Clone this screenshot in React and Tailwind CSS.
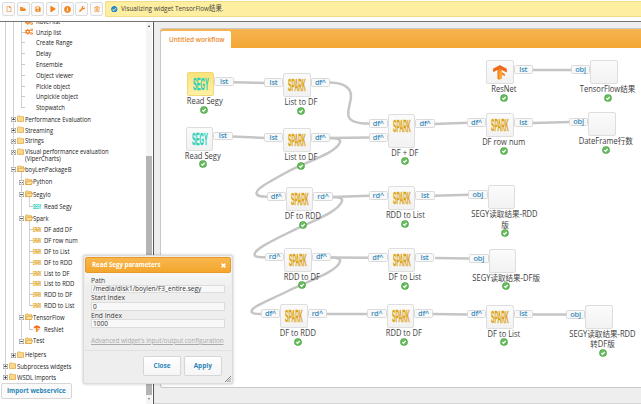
import React from "react";
import { FaFolderOpen, FaSave, FaPlay, FaInfoCircle, FaWrench, FaRegTrashAlt, FaRegFile, FaCheckCircle, FaCogs } from "react-icons/fa";

function BrandMark({ text, className }) {
  return (
    <svg viewBox="0 0 17 12" preserveAspectRatio="none" className={`overflow-visible ${className}`}>
      <g transform={text === "SPARK" ? "scale(0.325 1)" : "scale(0.4 1)"}>
        <text x="0" y="11.8" fontSize="16" fontWeight="700" fill="currentColor" stroke="currentColor" strokeWidth="0.3" fontFamily="Liberation Sans, sans-serif">
          {text}
        </text>
      </g>
    </svg>
  );
}

function TensorMark({ className }) {
  return (
    <svg viewBox="0 0 14 15" className={className}>
      <path d="M0.3 3.8 6.8 0.3 13.6 3.8V7.3L9 5V7.2L11.8 8.7V11.2L9 9.8V13.2L5.8 14.8 4.4 13.8V4.8L0.3 6.9Z" fill="#f58220" />
      <path d="M6.8 0.3 13.6 3.8V7.3L6.8 3.7 0.3 6.9V3.8Z" fill="#ee6a1f" />
      <path d="M7 5.2 9 4.5V13.2L6.2 14.8V5.4Z" fill="#f9a63a" />
    </svg>
  );
}

function Check() {
  return (
    <svg viewBox="0 0 16 16" className="-mt-[1px] h-[8px] w-[8px]">
      <circle cx="8" cy="8" r="7.6" fill="#4ba548" />
      <circle cx="8" cy="8" r="5.8" fill="#69bd5d" />
      <path d="M4.6 8.2 7 10.6 11.6 5.8" fill="none" stroke="#fff" strokeWidth="2.5" />
    </svg>
  );
}

function Folder({ open }) {
  return (
    <svg viewBox="0 0 16 14" className="h-[7px] w-[8px] shrink-0">
      <path d="M1 12.5V2.5L2.2 1.2H6L7.4 3H13V12.5Z" fill="#fbd98a" stroke="#d79a35" strokeWidth="1.3" />
      {open && <path d="M1 12.8 4 6H15.6L12.8 12.8Z" fill="#fde2a0" stroke="#d98f25" strokeWidth="1.3" />}
    </svg>
  );
}

function Expander({ open }) {
  return (
    <svg viewBox="0 0 9 9" className="h-[5px] w-[5px]">
      <rect x="0.5" y="0.5" width="8" height="8" fill="#fff" stroke="#8a8a8a" />
      <path d={open ? "M2 4.5H7" : "M2 4.5H7M4.5 2V7"} stroke="#333" strokeWidth="1.4" />
    </svg>
  );
}

// d: depth, k: kind, t: text, c: vertical centre of the row
const ROWS = [
  { d: 2, k: "gear", t: "Ravel list", c: 22 },
  { d: 2, k: "gear", t: "Unzip list", c: 32.6 },
  { d: 2, k: "leaf", t: "Create Range", c: 43.4 },
  { d: 2, k: "leaf", t: "Delay", c: 54.2 },
  { d: 2, k: "leaf", t: "Ensemble", c: 65 },
  { d: 2, k: "leaf", t: "Object viewer", c: 75.8 },
  { d: 2, k: "leaf", t: "Pickle object", c: 86.6 },
  { d: 2, k: "leaf", t: "Unpickle object", c: 97.4 },
  { d: 2, k: "leaf", t: "Stopwatch", c: 108.2 },
  { d: 1, k: "closed", t: "Performance Evaluation", c: 119.8 },
  { d: 1, k: "closed", t: "Streaming", c: 130.6 },
  { d: 1, k: "closed", t: "Strings", c: 141.4 },
  { d: 1, k: "closed", t: "Visual performance evaluation", t2: "(ViperCharts)", c: 152.4 },
  { d: 1, k: "open", t: "boyLenPackageB", c: 170 },
  { d: 2, k: "open", t: "Python", c: 182.2 },
  { d: 2, k: "open", t: "Segylo", c: 195 },
  { d: 3, k: "segy", t: "Read Segy", c: 206.8 },
  { d: 2, k: "open", t: "Spark", c: 218.6 },
  { d: 3, k: "spark", t: "DF add DF", c: 230.4 },
  { d: 3, k: "spark", t: "DF row num", c: 241.2 },
  { d: 3, k: "spark", t: "DF to List", c: 252 },
  { d: 3, k: "spark", t: "DF to RDD", c: 262.8 },
  { d: 3, k: "spark", t: "List to DF", c: 273.6 },
  { d: 3, k: "spark", t: "List to RDD", c: 284.4 },
  { d: 3, k: "spark", t: "RDD to DF", c: 295.1 },
  { d: 3, k: "spark", t: "RDD to List", c: 305.8 },
  { d: 2, k: "open", t: "TensorFlow", c: 317.8 },
  { d: 3, k: "tensor", t: "ResNet", c: 329.7 },
  { d: 2, k: "open", t: "Test", c: 341.4 },
  { d: 1, k: "closed", t: "Helpers", c: 355.2 },
  { d: 0, k: "closed", t: "Subprocess widgets", c: 367 },
  { d: 0, k: "closed", t: "WSDL Imports", c: 377.8 },
];

function TreeRow({ row, prev }) {
  const height = prev ? row.c - prev.c : 0;
  const folder = row.k === "open" || row.k === "closed";
  return (
    <div className="flex w-[145px] shrink-0 items-stretch pl-[1px]" style={{ height }}>
      {Array.from({ length: row.d + 1 }, (_, i) => (
        <div key={i} className="flex w-[8px] shrink-0 flex-col items-end justify-end">
          <div className="w-[4px] flex-1 border-l border-[#d2d2d2]" />
          {i === row.d && !folder && <div className="h-px w-[4px] bg-[#c8c8c8]" />}
          {i === row.d && folder && (
            <div className="-mb-[2.5px] flex h-[5px] w-[8px] justify-center bg-white">
              <Expander open={row.k === "open"} />
            </div>
          )}
        </div>
      ))}
      <div className={`flex h-[10px] translate-y-[4.2px] items-center self-end ${folder ? "" : "gap-[3px]"}`}>
        {folder && <Folder open={row.k === "open"} />}
        {row.k === "leaf" && <span className="w-[8px]" />}
        {row.k === "gear" && <FaCogs className="h-[7px] w-[8px] text-[#ef7c1c]" />}
        {row.k === "spark" && <BrandMark text="SPARK" className="h-[6px] w-[8px] text-[#dfa30e]" />}
        {row.k === "segy" && <BrandMark text="SEGY" className="h-[6px] w-[8px] text-[#22cfc0]" />}
        {row.k === "tensor" && <TensorMark className="h-[7px] w-[8px]" />}
        <div className="origin-left scale-x-[.82] text-[7.2px] leading-[10px] whitespace-nowrap text-[#222]">
          {row.t2 ? (
            <div className="flex h-[10px] flex-col leading-[7.4px]">
              <span className="mt-[1.3px]">{row.t}</span>
              <span>{row.t2}</span>
            </div>
          ) : (
            row.t
          )}
        </div>
      </div>
    </div>
  );
}

// Top left corner of the canvas in workspace coordinates
const OX = 161;
const OY = 47;

const NODES = [
  { x: 187, y: 72.3, k: "segy", t: "Read Segy", out: "lst", selected: true },
  { x: 283.3, y: 73.3, k: "spark", t: "List to DF", in: ["lst"], out: "df^" },
  { x: 185.8, y: 126.7, k: "segy", t: "Read Segy", out: "lst" },
  { x: 283.3, y: 128.2, k: "spark", t: "List to DF", in: ["lst"], out: "df^" },
  { x: 388, y: 114.3, k: "spark", t: "DF + DF", in: ["df^", "df^"], out: "df^" },
  { x: 486.3, y: 113.2, k: "spark", t: "DF row num", in: ["df^"], out: "lst" },
  { x: 588.3, y: 112.4, t: "DateFrame行数", in: ["obj"] },
  { x: 486.3, y: 60.2, k: "tensor", t: "ResNet", out: "lst" },
  { x: 590.3, y: 60.2, t: "TensorFlow结果", in: ["obj"] },
  { x: 286, y: 187.3, k: "spark", t: "DF to RDD", in: ["df^"], out: "rd^" },
  { x: 388, y: 186, k: "spark", t: "RDD to List", in: ["rd^"], out: "lst" },
  { x: 487.5, y: 185, t: "SEGY读取结果-RDD", t2: "版", in: ["obj"] },
  { x: 284.3, y: 247.5, k: "spark", t: "RDD to DF", in: ["rd^"], out: "df^" },
  { x: 387.5, y: 248.2, k: "spark", t: "DF to List", in: ["df^"], out: "lst" },
  { x: 488.6, y: 248.8, t: "SEGY读取结果-DF版", in: ["obj"] },
  { x: 280.3, y: 304.2, k: "spark", t: "DF to RDD", in: ["df^"], out: "rd^" },
  { x: 386.5, y: 304.2, k: "spark", t: "RDD to DF", in: ["rd^"], out: "df^" },
  { x: 486.3, y: 304.6, k: "spark", t: "DF to List", in: ["df^"], out: "lst" },
  { x: 585.3, y: 304.8, t: "SEGY读取结果-RDD", t2: "转DF版", in: ["obj"] },
];

const WIRES = [
  "M233 82.3 265 83",
  "M330 82.5C342 83 351 86.5 351 96C351 103 347 110 348.5 116C350 122 359 123.6 369 123.6",
  "M232 136.5 265 138",
  "M330 138 369 137.5",
  "M330 138C336 138 341 139 340 142C337 153 305 162 288 171.5C265 184 256.5 189 256.5 193C256.5 196 260 196.7 267 196.7",
  "M434 123.9 468 122.8",
  "M533 123 570 121.9",
  "M533 70 571 70",
  "M332 197 369 195.8",
  "M332 197C338 197 343 197.5 342 201C339 212 310 222 290 232C267 243 254.5 250 254.5 254.5C254.5 257 259 257.3 266 257.3",
  "M435 195.8 469 194.7",
  "M330 257.5 369 257.7",
  "M330 257.5C336 257.5 341 258 340 261.5C337 272 308 281 288 291C263 303 251.5 307 251.5 311.5C251.5 313.5 256 314 262 314",
  "M435 257.9 470 258.4",
  "M327 314 368 314",
  "M433 314 468 314.5",
  "M533 314.5 567 314.5",
];

function Port({ children }) {
  return (
    <div className="flex h-[8.6px] w-[19.5px] items-center justify-center rounded-[1.5px] border border-[#dadada] bg-[#f9f9f9] text-[7.4px] leading-none font-semibold tracking-[-0.2px] text-[#3a8dbb]">
      <span className="-translate-y-[0.4px]">{children}</span>
    </div>
  );
}

function Node({ node }) {
  const inputs = node.in || [];
  const tall = inputs.length > 1;
  return (
    <div className="absolute w-[27.3px]" style={{ left: node.x - OX, top: node.y - OY }}>
      <div
        className={`flex justify-center rounded-[2px] border ${tall ? "h-[33.5px]" : "h-[24px]"} ${
          node.selected ? "border-[#f0d878] bg-linear-to-b from-[#fbe27a] to-[#fff0a4]" : "border-[#dedede] bg-linear-to-b from-[#fbfbfb] to-[#f2f2f2]"
        }`}
      >
        {node.k === "spark" && <BrandMark text="SPARK" className="mt-[5px] h-[12px] w-[17px] text-[#dda313]" />}
        {node.k === "segy" && <BrandMark text="SEGY" className="mt-[5px] h-[12px] w-[15px] text-[#27d0b8]" />}
        {node.k === "tensor" && <TensorMark className="mt-[4px] h-[15px] w-[14px]" />}
      </div>
      <div className="absolute top-[5.2px] right-full flex flex-col gap-[5.2px]">
        {inputs.map((p, i) => (
          <Port key={i}>{p}</Port>
        ))}
      </div>
      {node.out && (
        <div className="absolute top-[5.2px] left-full">
          <Port>{node.out}</Port>
        </div>
      )}
      <div className="-ml-[22.7px] flex w-[80px] flex-col items-center text-[8.3px] leading-[10.6px] whitespace-nowrap text-[#3c3c3c]">
        <span className="origin-center scale-x-[.91]">{node.t}</span>
        {node.t2 && <span className="origin-center scale-x-[.91]">{node.t2}</span>}
        <Check />
      </div>
    </div>
  );
}

function Field({ label, value }) {
  return (
    <label className="block h-[17.4px]">
      <span className="block h-[8.6px] origin-left scale-x-[.88] text-[7.6px] leading-[8px] text-[#3c3c3c]">{label}</span>
      <span className="flex h-[8.8px] items-center border border-[#dcdcdc] bg-[#f8f8f8] pl-[1px] text-[7.6px] leading-none text-[#333]">
        <span className="origin-left scale-x-[.86]">{value}</span>
      </span>
    </label>
  );
}

function ParametersDialog() {
  return (
    <div className="absolute top-[255px] left-[83px] flex h-[129px] w-[150px] flex-col rounded-[2px] border border-[#dcdcdc] bg-[#eee] p-[1px] shadow-[0_0_3px_rgba(0,0,0,0.25)]">
      <div className="flex h-[16px] items-center justify-between rounded-[2px] border border-[#e9992a] bg-linear-to-b from-[#f8b74e] to-[#f4a62c] pr-[4px] pl-[5.5px] text-[7.6px] font-bold text-white">
        <span className="origin-left scale-x-[.81] leading-none whitespace-nowrap">Read Segy parameters</span>
        <svg viewBox="0 0 8 8" className="h-[5px] w-[5px]">
          <path d="M1 1 7 7M7 1 1 7" stroke="#fff" strokeWidth="2.4" />
        </svg>
      </div>
      <div className="flex h-[77px] flex-col bg-linear-to-b from-[#f7f7f7] to-[#eee] to-20% px-[6px] pt-[3px]">
        <Field label="Path" value="/media/disk1/boylen/F3_entire.segy" />
        <Field label="Start Index" value="0" />
        <Field label="End Index" value="1000" />
        <a className="mt-[7px] w-fit origin-left scale-x-[.85] text-[7.4px] leading-[10px] tracking-[-0.04px] whitespace-nowrap text-[#aaa] underline">Advanced widget's input/output configuration</a>
      </div>
      <div className="flex flex-1 justify-end gap-[3px] border-t border-[#e0e0e0] pt-[5px] pr-[9px]">
        {["Close", "Apply"].map((t) => (
          <button key={t} className="h-[19.5px] w-[38px] rounded-[2px] border border-[#d6d6d6] bg-linear-to-b from-[#fff] to-[#f5f5f5] text-[7.6px] leading-none font-bold text-[#2b86b8]">
            <span className="inline-block scale-x-[.84]">{t}</span>
          </button>
        ))}
      </div>
      <svg viewBox="0 0 8 8" className="absolute right-[1px] bottom-[1px] h-[6px] w-[6px]">
        <path d="M0 8 8 0M3 8 8 3M6 8 8 6" stroke="#666" strokeWidth="1" />
      </svg>
    </div>
  );
}

const TOOLS = [FaRegFile, FaFolderOpen, FaSave, FaPlay, FaInfoCircle, FaWrench, FaRegTrashAlt];

export default function App() {
  return (
    <div className="relative flex h-[404px] w-[641px] flex-col overflow-hidden bg-white font-['Open_Sans','Noto_Sans_CJK_SC',sans-serif]">
      <header className="flex h-[22px] shrink-0 items-start border-b-[1.5px] border-[#747474] bg-white">
        <div className="flex gap-[1.7px] pt-[2px] pl-[2px]">
          {TOOLS.map((Icon, i) => (
            <button key={i} className="flex h-[14px] w-[13px] items-center justify-center rounded-[2px] border border-[#dcdcdc] bg-[#fafafa] text-[#f08418]">
              <Icon className={i === 4 ? "h-[7px] w-[7px]" : "h-[6px] w-[6px]"} />
            </button>
          ))}
        </div>
        <div className="mt-px ml-[2px] flex h-[15.5px] flex-1 items-center gap-[3px] rounded-l-[2px] border border-r-0 border-[#f3de85] bg-[#feeea0] pl-[5px] text-[7.8px] leading-none text-[#444]">
          <FaCheckCircle className="h-[6.5px] w-[6.5px] text-[#2186d0]" />
          <span className="origin-left scale-x-[.815] whitespace-nowrap">Visualizing widget TensorFlow结果.</span>
        </div>
      </header>

      <div className="flex min-h-0 flex-1">
        <aside className="flex w-[154px] shrink-0 border-r border-[#555]">
          <div className="flex w-[146px] flex-col overflow-hidden">
            {ROWS.map((row, i) => (
              <TreeRow key={i} row={row} prev={ROWS[i - 1]} />
            ))}
            <button className="mt-[5.5px] ml-[1px] flex h-[16px] w-[71px] shrink-0 items-center justify-center rounded-[2px] border border-[#d6d6d6] bg-[#fafafa] text-[7.6px] leading-none font-bold whitespace-nowrap text-[#2b86b8]">
              <span className="shrink-0 origin-center scale-x-[.83]">Import webservice</span>
            </button>
          </div>
          <div className="mr-[1px] flex w-[6px] flex-col items-center bg-[#f4f4f4] pt-[3px]">
            <div className="h-0 w-0 border-x-[1.5px] border-b-[2.5px] border-x-transparent border-b-[#333]" />
            <div className="mt-[129px] h-[239px] w-full bg-[#b4b4b4]" />
            <div className="mt-[3px] h-0 w-0 border-x-[1.5px] border-t-[2.5px] border-x-transparent border-t-[#777]" />
          </div>
        </aside>

        <main className="flex min-w-0 flex-1 flex-col border-b border-[#d4d4d4] bg-[#eee] pt-[6px] pl-[6px]">
          <section className="flex h-[360px] flex-col rounded-l-[3px] border border-r-0 border-[#c9c9c9] bg-white">
            <div className="flex h-[19px] shrink-0 items-end rounded-tl-[2px] bg-linear-to-b from-[#f6b451] to-[#f3a632]">
              <div className="flex h-[17px] w-[70px] items-center rounded-t-[2px] bg-white pl-[8px] text-[7.8px] font-semibold whitespace-nowrap text-[#ec8a2b]">
                <span className="origin-left scale-x-[.82]">Untitled workflow</span>
              </div>
            </div>
            <div className="relative -mt-px flex-1">
              <svg viewBox="161 47 480 340" className="absolute top-0 left-0 h-[340px] w-[480px]">
                {WIRES.map((d) => (
                  <path key={d} d={d} fill="none" stroke="#c5c5c5" strokeWidth="2.5" />
                ))}
              </svg>
              {NODES.map((node, i) => (
                <Node key={i} node={node} />
              ))}
            </div>
          </section>
        </main>
      </div>
      <ParametersDialog />
    </div>
  );
}
